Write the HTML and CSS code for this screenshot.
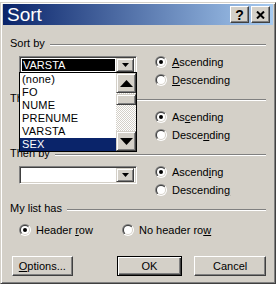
FILE: index.html
```html
<!DOCTYPE html>
<html>
<head>
<meta charset="utf-8">
<link rel="stylesheet" href="styles.css">
</head>
<body>
<svg class="defs" width="0" height="0" aria-hidden="true">
  <defs>
    <linearGradient id="rOut" x1="0" y1="0" x2="1" y2="1">
      <stop offset="0.5" stop-color="#808080"/>
      <stop offset="0.5" stop-color="#ffffff"/>
    </linearGradient>
    <linearGradient id="rIn" x1="0" y1="0" x2="1" y2="1">
      <stop offset="0.5" stop-color="#404040"/>
      <stop offset="0.5" stop-color="#d4d0c8"/>
    </linearGradient>
  </defs>
</svg>
<div class="window">
  <div class="titlebar">
    <span class="title">Sort</span>
    <span class="tbtn help">?</span>
    <span class="tbtn close"><svg width="9" height="8" viewBox="0 0 9 8"><path d="M1 0.5 L8 7.5 M8 0.5 L1 7.5" stroke="#000" stroke-width="2"/></svg></span>
  </div>
  <div class="body">
    <section class="group">
      <div class="ghead"><span class="glabel">Sort by</span><span class="gline"></span></div>
      <div class="grow">
        <div class="combo">
          <div class="field sel">VARSTA</div>
          <div class="dbtn"><svg width="7" height="4" viewBox="0 0 7 4"><path d="M0 0H7L3.5 4Z" fill="#000"/></svg></div>
          <div class="droplist">
            <div class="items">
              <div class="item">(none)</div>
              <div class="item">FO</div>
              <div class="item">NUME</div>
              <div class="item">PRENUME</div>
              <div class="item">VARSTA</div>
              <div class="item hl">SEX</div>
            </div>
            <div class="sbar">
              <div class="sbtn"><svg width="13" height="7" viewBox="0 0 13 7"><path d="M0 7H13L6.5 0Z" fill="#000"/></svg></div>
              <div class="track"><div class="thumb"></div></div>
              <div class="sbtn"><svg width="13" height="7" viewBox="0 0 13 7"><path d="M0 0H13L6.5 7Z" fill="#000"/></svg></div>
            </div>
          </div>
        </div>
        <div class="radios">
          <label class="radio"><svg width="12" height="12" viewBox="0 0 12 12"><circle cx="6" cy="6" r="6" fill="url(#rOut)"/><circle cx="6" cy="6" r="5" fill="url(#rIn)"/><circle cx="6" cy="6" r="4" fill="#fff"/><circle cx="6" cy="6" r="2" fill="#000"/></svg><span><u>A</u>scending</span></label>
          <label class="radio"><svg width="12" height="12" viewBox="0 0 12 12"><circle cx="6" cy="6" r="6" fill="url(#rOut)"/><circle cx="6" cy="6" r="5" fill="url(#rIn)"/><circle cx="6" cy="6" r="4" fill="#fff"/></svg><span><u>D</u>escending</span></label>
        </div>
      </div>
    </section>
    <section class="group">
      <div class="ghead"><span class="glabel clip">Then by</span><span class="gline"></span></div>
      <div class="grow">
        <div class="combo">
          <div class="field"></div>
          <div class="dbtn"><svg width="7" height="4" viewBox="0 0 7 4"><path d="M0 0H7L3.5 4Z" fill="#000"/></svg></div>
        </div>
        <div class="radios">
          <label class="radio"><svg width="12" height="12" viewBox="0 0 12 12"><circle cx="6" cy="6" r="6" fill="url(#rOut)"/><circle cx="6" cy="6" r="5" fill="url(#rIn)"/><circle cx="6" cy="6" r="4" fill="#fff"/><circle cx="6" cy="6" r="2" fill="#000"/></svg><span>As<u>c</u>ending</span></label>
          <label class="radio"><svg width="12" height="12" viewBox="0 0 12 12"><circle cx="6" cy="6" r="6" fill="url(#rOut)"/><circle cx="6" cy="6" r="5" fill="url(#rIn)"/><circle cx="6" cy="6" r="4" fill="#fff"/></svg><span>Desce<u>n</u>ding</span></label>
        </div>
      </div>
    </section>
    <section class="group">
      <div class="ghead"><span class="glabel">Then by</span><span class="gline"></span></div>
      <div class="grow">
        <div class="combo">
          <div class="field"></div>
          <div class="dbtn"><svg width="7" height="4" viewBox="0 0 7 4"><path d="M0 0H7L3.5 4Z" fill="#000"/></svg></div>
        </div>
        <div class="radios">
          <label class="radio"><svg width="12" height="12" viewBox="0 0 12 12"><circle cx="6" cy="6" r="6" fill="url(#rOut)"/><circle cx="6" cy="6" r="5" fill="url(#rIn)"/><circle cx="6" cy="6" r="4" fill="#fff"/><circle cx="6" cy="6" r="2" fill="#000"/></svg><span>Ascend<u>i</u>ng</span></label>
          <label class="radio"><svg width="12" height="12" viewBox="0 0 12 12"><circle cx="6" cy="6" r="6" fill="url(#rOut)"/><circle cx="6" cy="6" r="5" fill="url(#rIn)"/><circle cx="6" cy="6" r="4" fill="#fff"/></svg><span>Descendin<u>g</u></span></label>
        </div>
      </div>
    </section>
    <section class="group last">
      <div class="ghead"><span class="glabel">My list has</span><span class="gline"></span></div>
      <div class="hrow">
        <label class="radio hr1"><svg width="12" height="12" viewBox="0 0 12 12"><circle cx="6" cy="6" r="6" fill="url(#rOut)"/><circle cx="6" cy="6" r="5" fill="url(#rIn)"/><circle cx="6" cy="6" r="4" fill="#fff"/><circle cx="6" cy="6" r="2" fill="#000"/></svg><span>Header <u>r</u>ow</span></label>
        <label class="radio"><svg width="12" height="12" viewBox="0 0 12 12"><circle cx="6" cy="6" r="6" fill="url(#rOut)"/><circle cx="6" cy="6" r="5" fill="url(#rIn)"/><circle cx="6" cy="6" r="4" fill="#fff"/></svg><span>No header ro<u>w</u></span></label>
      </div>
    </section>
    <div class="buttons">
      <button class="btn opt"><u>O</u>ptions...</button>
      <button class="btn ok">OK</button>
      <button class="btn cancel">Cancel</button>
    </div>
  </div>
</div>
</body>
</html>
```
FILE: styles.css
```css
* { box-sizing: border-box; }
html, body { margin: 0; padding: 0; }
body {
  background: #ffffff;
  width: 276px;
  height: 288px;
  overflow: hidden;
  font-family: "Liberation Sans", Arial, sans-serif;
  font-size: 11px;
  color: #000;
}
.defs { position: absolute; width: 0; height: 0; }
.window {
  margin-top: 2px;
  width: 276px;
  height: 282px;
  background: #d4d0c8;
  border: 1px solid;
  border-color: #d4d0c8 #404040 #404040 #d4d0c8;
  box-shadow: inset 1px 1px #ffffff, inset -1px -1px #808080;
  padding: 1px 2px 2px 2px;
  display: flex;
  flex-direction: column;
}
.titlebar {
  height: 21px;
  background: linear-gradient(to right, #0a246a, #a6caf0);
  display: flex;
  align-items: center;
  padding: 0 3px 0 4px;
}
.title {
  flex: 1;
  color: #fff;
  font-size: 19px;
  line-height: 21px;
}
.tbtn {
  width: 19px;
  height: 17px;
  background: #d4d0c8;
  border: 1px solid;
  border-color: #ffffff #404040 #404040 #ffffff;
  box-shadow: inset -1px -1px #808080;
  display: flex;
  align-items: center;
  justify-content: center;
  font-weight: bold;
  font-size: 14px;
  line-height: 1;
}
.help { margin-right: 2px; }
.body {
  flex: 1;
  padding: 12px 7px 0 7px;
  display: flex;
  flex-direction: column;
}
.group { margin-bottom: 3px; }
.ghead {
  display: flex;
  height: 13px;
}
.glabel { line-height: 13px; white-space: nowrap; }
.glabel.clip { width: 9px; overflow: hidden; flex: none; }
.gline {
  flex: 1;
  margin: 7px 0 0 5px;
  height: 2px;
  border-top: 1px solid #808080;
  border-bottom: 1px solid #ffffff;
}
.clip + .gline { margin-left: 36px; }
.grow {
  display: grid;
  grid-template-columns: 145px 1fr;
}
.combo {
  position: relative;
  margin: 6px 0 0 9px;
  width: 118px;
  height: 18px;
  background: #fff;
  border: 1px solid;
  border-color: #808080 #ffffff #ffffff #808080;
  box-shadow: inset 1px 1px #404040, inset -1px -1px #d4d0c8;
  padding: 2px 2px 2px 2px;
  display: flex;
}
.field {
  flex: 1;
  line-height: 12px;
  padding-left: 1px;
  margin-right: 1px;
}
.field.sel { background: #000; color: #fff; }
.dbtn {
  width: 18px;
  background: #d4d0c8;
  border: 1px solid;
  border-color: #d4d0c8 #404040 #404040 #d4d0c8;
  box-shadow: inset 1px 1px #fff, inset -1px -1px #808080;
  display: flex;
  align-items: center;
  justify-content: center;
  margin: -1px 0;
}
.droplist {
  position: absolute;
  left: -1px;
  top: calc(100% - 1px);
  width: 118px;
  height: 80px;
  background: #fff;
  border: 1px solid #000;
  display: flex;
  z-index: 5;
}
.items { flex: 1; }
.item {
  height: 13px;
  line-height: 13px;
  padding-left: 2px;
  letter-spacing: 0.2px;
}
.item.hl { background: #0a246a; color: #fff; }
.sbar {
  width: 20px;
  display: flex;
  flex-direction: column;
}
.sbtn {
  height: 20px;
  background: #d4d0c8;
  border: 1px solid;
  border-color: #d4d0c8 #404040 #404040 #d4d0c8;
  box-shadow: inset 1px 1px #fff, inset -1px -1px #808080;
  display: flex;
  align-items: center;
  justify-content: center;
}
.track {
  flex: 1;
  background: repeating-conic-gradient(#d4d0c8 0 25%, #ffffff 0 50%) 0 0 / 2px 2px;
  padding-top: 1px;
}
.thumb {
  height: 11px;
  background: #d4d0c8;
  border: 1px solid;
  border-color: #d4d0c8 #404040 #404040 #d4d0c8;
  box-shadow: inset 1px 1px #fff, inset -1px -1px #808080;
}
.radios {
  margin-top: 3px;
  display: flex;
  flex-direction: column;
}
.radio {
  height: 18px;
  display: flex;
  align-items: center;
  gap: 5px;
  white-space: nowrap;
}
.radio svg { flex: none; }
.last { margin-bottom: 0; }
.hrow {
  margin: 6px 0 0 9px;
  display: flex;
}
.hr1 { width: 103px; }
.buttons {
  margin-top: 17px;
  padding-left: 2px;
  display: flex;
}
.btn {
  height: 20px;
  font-family: "Liberation Sans", Arial, sans-serif;
  font-size: 11px;
  color: #000;
  background: #d4d0c8;
  border: 1px solid;
  border-color: #ffffff #404040 #404040 #ffffff;
  box-shadow: inset -1px -1px #808080;
  padding: 0;
}
.opt { width: 61px; }
.ok {
  width: 66px;
  margin-left: 44px;
  border-color: #000;
  box-shadow: inset 1px 1px #fff, inset -1px -1px #404040, inset -2px -2px #808080;
}
.cancel { width: 72px; margin-left: 12px; }
```
